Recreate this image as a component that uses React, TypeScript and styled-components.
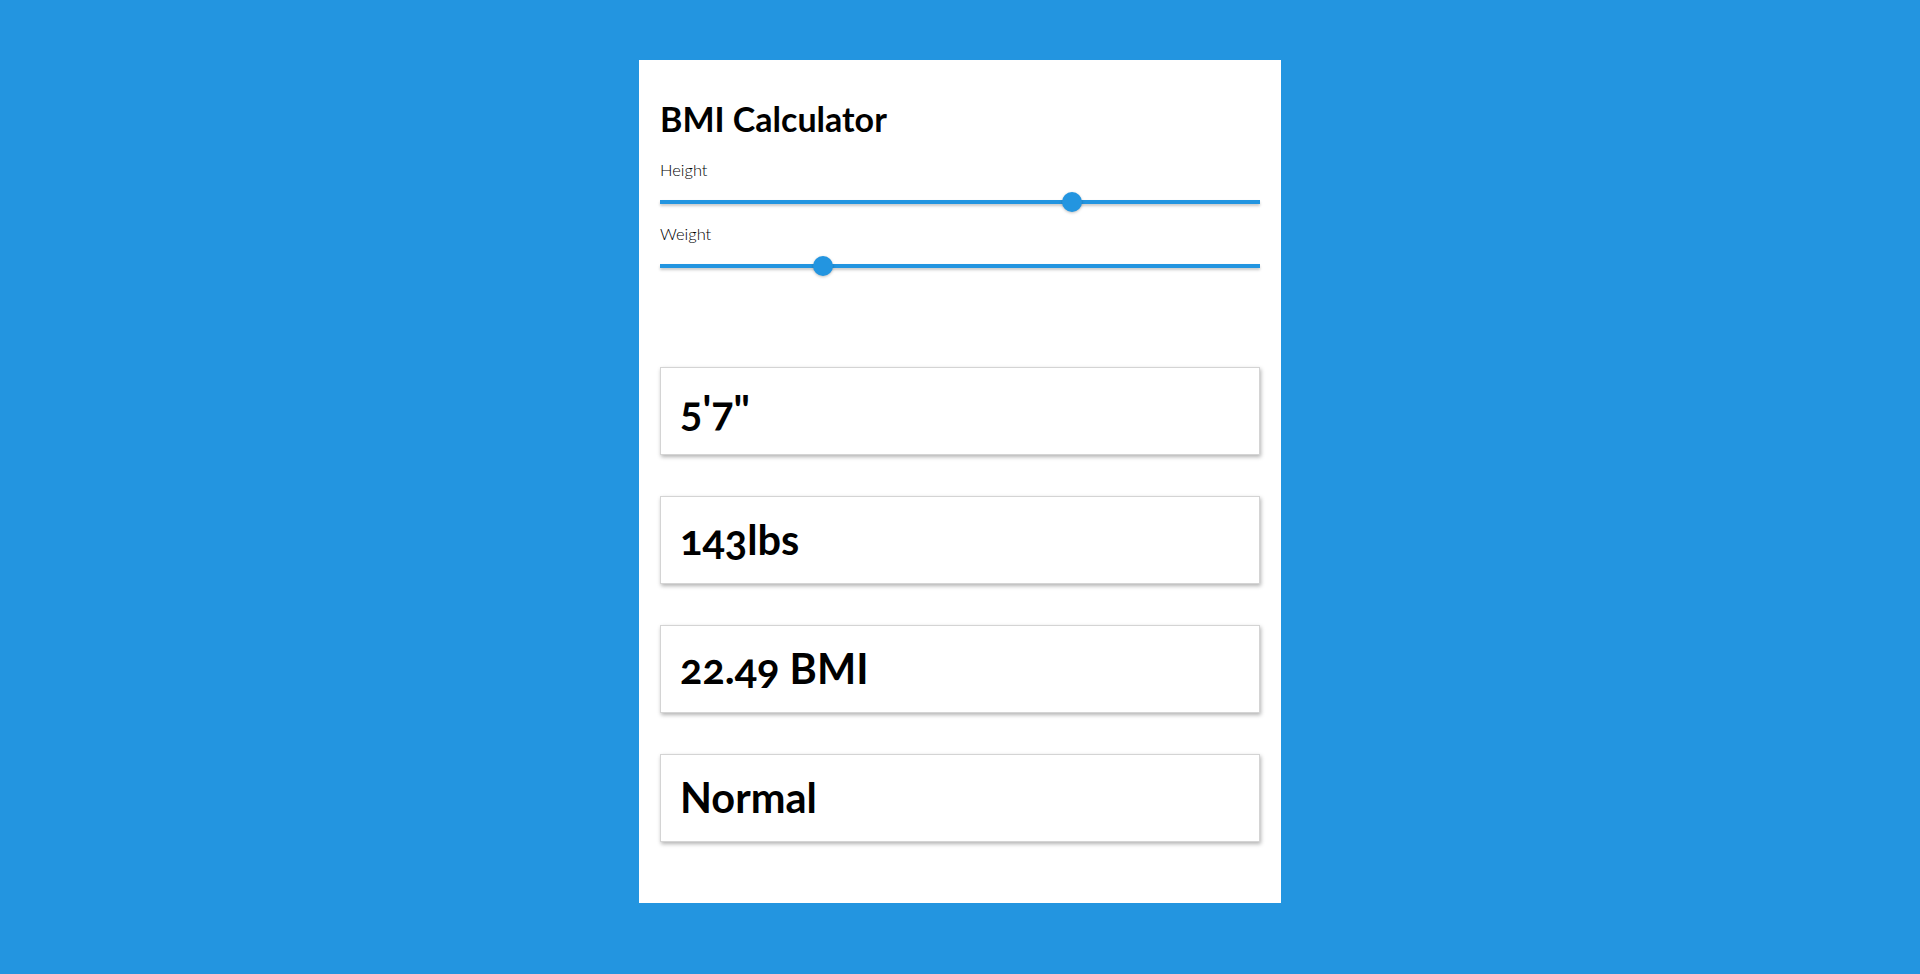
import React, { useState } from "react";
import styled, { createGlobalStyle } from "styled-components";

const BLUE = "#2395e0";

const GlobalStyle = createGlobalStyle`
  html, body {
    margin: 0;
    padding: 0;
    background: ${BLUE};
  }
  body {
    font-family: "Lato", "Open Sans", sans-serif;
    color: #000;
  }
  * { box-sizing: border-box; }
`;

const Page = styled.main`
  min-height: 100vh;
  padding: 60px 0 71px;
  display: flex;
  justify-content: center;
  align-items: flex-start;
`;

const Card = styled.section`
  width: 642px;
  background: #fff;
  padding: 39px 21px 61px;
  display: flex;
  flex-direction: column;
`;

const Title = styled.h1`
  margin: 0;
  font-size: 34px;
  line-height: 40px;
  font-weight: 700;
  color: #000;
`;

const Controls = styled.div`
  display: flex;
  flex-direction: column;
  gap: 12px;
  margin-top: 21px;
`;

const Field = styled.label`
  display: flex;
  flex-direction: column;
  gap: 12px;
`;

const FieldLabel = styled.span`
  font-size: 16.5px;
  line-height: 20px;
  font-weight: 300;
  color: #000;
`;

const Range = styled.input.attrs({ type: "range" })`
  -webkit-appearance: none;
  appearance: none;
  display: block;
  width: 100%;
  height: 20px;
  margin: 0;
  padding: 0;
  background: transparent;
  cursor: pointer;

  &:focus { outline: none; }

  &::-webkit-slider-runnable-track {
    height: 4px;
    background: ${BLUE};
    border: none;
    box-shadow: 0 2px 3px rgba(0, 0, 0, 0.22);
  }

  &::-webkit-slider-thumb {
    -webkit-appearance: none;
    appearance: none;
    width: 20px;
    height: 20px;
    margin-top: -8px;
    border: none;
    border-radius: 50%;
    background: ${BLUE};
    box-shadow: 0 1px 3px rgba(0, 0, 0, 0.25);
  }

  &::-moz-range-track {
    height: 4px;
    background: ${BLUE};
  }

  &::-moz-range-thumb {
    width: 20px;
    height: 20px;
    border: none;
    border-radius: 50%;
    background: ${BLUE};
  }
`;

const Results = styled.div`
  display: flex;
  flex-direction: column;
  gap: 41px;
  margin-top: 91px;
`;

const ResultBox = styled.div`
  height: 88px;
  padding: 18px 19px 20px;
  border: 1px solid #d4d4d4;
  background: #fff;
  box-shadow: 1px 2px 4px rgba(0, 0, 0, 0.3);
  font-size: 41.5px;
  line-height: 48px;
  font-weight: 700;
  font-variant-numeric: oldstyle-nums;
  color: #000;
  white-space: nowrap;
`;

function category(bmi: number): string {
  if (bmi < 18.5) return "Underweight";
  if (bmi < 25) return "Normal";
  if (bmi < 30) return "Overweight";
  return "Obese";
}

export default function App() {
  const [heightCm, setHeightCm] = useState(170);
  const [weightKg, setWeightKg] = useState(65);

  const totalInches = Math.round(heightCm / 2.54);
  const feet = Math.floor(totalInches / 12);
  const inches = totalInches % 12;
  const lbs = Math.round(weightKg * 2.20462);
  const bmi = weightKg / Math.pow(heightCm / 100, 2);

  return (
    <>
      <GlobalStyle />
      <Page>
        <Card>
          <Title>BMI Calculator</Title>
          <Controls>
            <Field>
              <FieldLabel>Height</FieldLabel>
              <Range
                min={100}
                max={201}
                step={1}
                value={heightCm}
                onChange={(e) => setHeightCm(Number(e.target.value))}
              />
            </Field>
            <Field>
              <FieldLabel>Weight</FieldLabel>
              <Range
                min={40}
                max={135}
                step={1}
                value={weightKg}
                onChange={(e) => setWeightKg(Number(e.target.value))}
              />
            </Field>
          </Controls>
          <Results>
            <ResultBox>{`${feet}'${inches}"`}</ResultBox>
            <ResultBox>{`${lbs}lbs`}</ResultBox>
            <ResultBox>{`${bmi.toFixed(2)} BMI`}</ResultBox>
            <ResultBox>{category(bmi)}</ResultBox>
          </Results>
        </Card>
      </Page>
    </>
  );
}
